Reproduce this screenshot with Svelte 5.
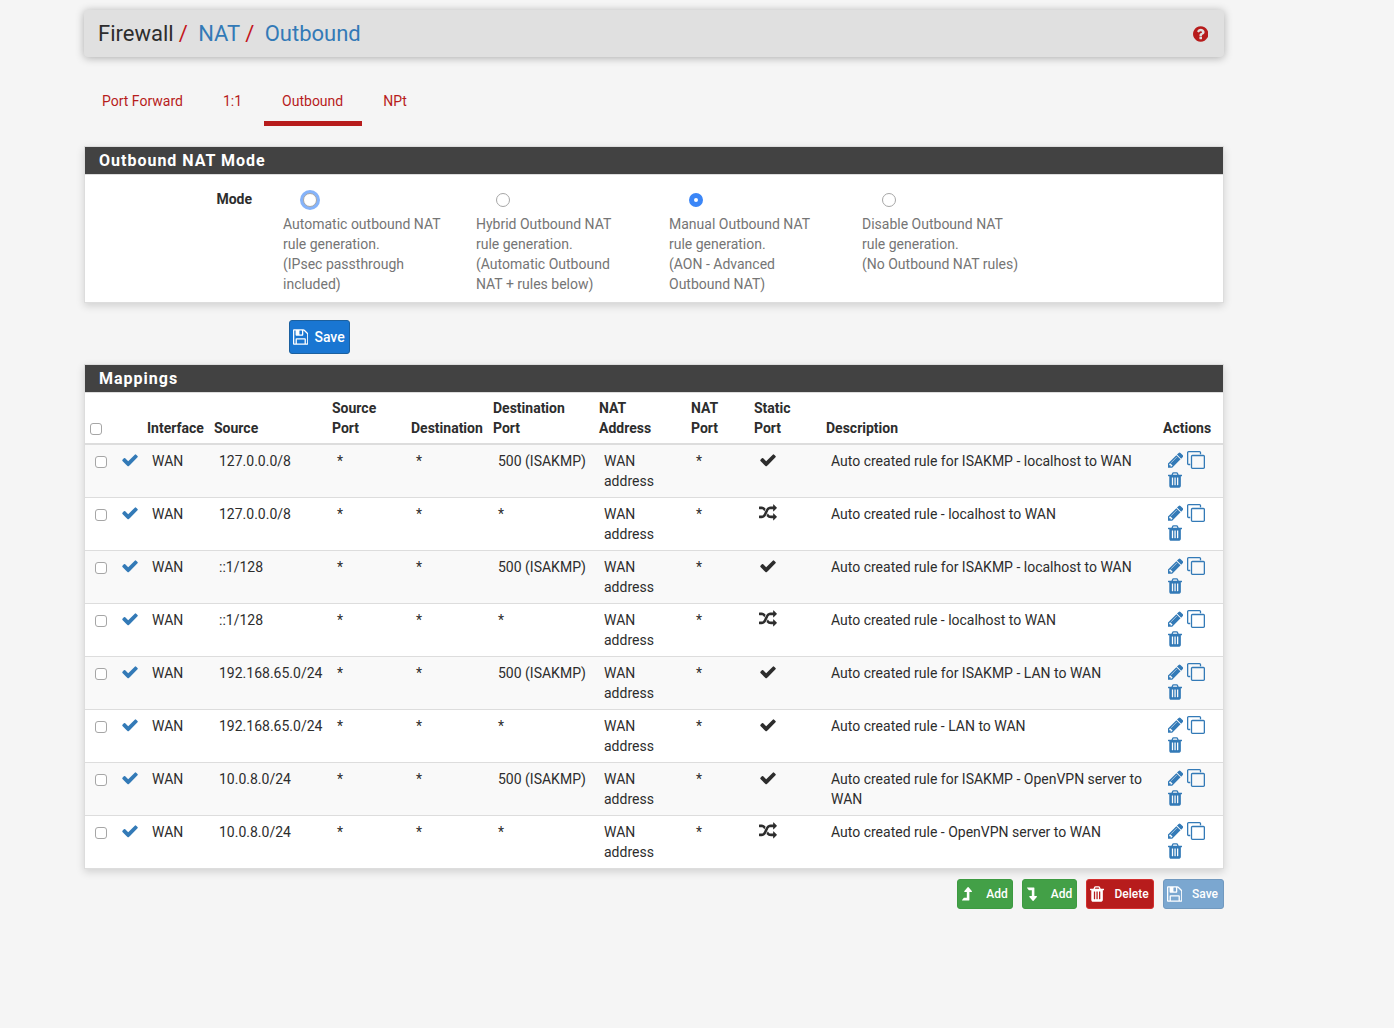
<script lang="ts">
	type Icon = { box: string; d: string };

	const icons: Record<string, Icon> = {
		check: {
			box: '0 0 1792 1792',
			d: 'M1671 566q0 40-28 68l-724 724-136 136q-28 28-68 28t-68-28l-136-136-362-362q-28-28-28-68t28-68l136-136q28-28 68-28t68 28l294 295 656-657q28-28 68-28t68 28l136 136q28 28 28 68z'
		},
		random: {
			box: '0 0 1792 1792',
			d: 'M666 481q-60 92-137 273-22-45-37-72.5t-40.5-63.5-51-56.5-63-35-81.5-14.5h-224q-14 0-23-9t-9-23v-192q0-14 9-23t23-9h224q250 0 410 225zm1126 799q0 14-9 23l-320 320q-9 9-23 9-13 0-22.5-9.5t-9.5-22.5v-192q-32 0-85 .5t-81 1-73-1-71-5-64-10.5-63-18.5-58-28.5-59-40-55-53.5-56-69.5q59-93 136-273 22 45 37 72.5t40.5 63.5 51 56.5 63 35 81.5 14.5h256v-192q0-14 9-23t23-9q12 0 24 10l319 319q9 9 9 23zm0-896q0 14-9 23l-320 320q-9 9-23 9-13 0-22.5-9.5t-9.5-22.5v-192h-256q-48 0-87 15t-69 45-51 61.5-45 77.5q-32 62-78 171-29 66-49.5 111t-54 105-64 100-74 83-90 68.5-106.5 42-128 16.5h-224q-14 0-23-9t-9-23v-192q0-14 9-23t23-9h224q48 0 87-15t69-45 51-61.5 45-77.5q32-62 78-171 29-66 49.5-111t54-105 64-100 74-83 90-68.5 106.5-42 128-16.5h256v-192q0-14 9-23t23-9q12 0 24 10l319 319q9 9 9 23z'
		},
		pencil: {
			box: '128 0 1536 1792',
			d: 'M491 1536l91-91-235-235-91 91v107h128v128h107zm523-928q0-22-22-22-10 0-17 7l-542 542q-7 7-7 17 0 22 22 22 10 0 17-7l542-542q7-7 7-17zm-54-192l416 416-832 832h-416v-416zm683 96q0 53-37 90l-166 166-416-416 166-165q36-38 90-38 53 0 91 38l235 234q37 39 37 91z'
		},
		clone: {
			box: '0 0 1792 1792',
			d: 'M1664 1632v-1088q0-13-9.5-22.5t-22.5-9.5h-1088q-13 0-22.5 9.5t-9.5 22.5v1088q0 13 9.5 22.5t22.5 9.5h1088q13 0 22.5-9.5t9.5-22.5zm128-1088v1088q0 66-47 113t-113 47h-1088q-66 0-113-47t-47-113v-1088q0-66 47-113t113-47h1088q66 0 113 47t47 113zm-384-384v160h-128v-160q0-13-9.5-22.5t-22.5-9.5h-1088q-13 0-22.5 9.5t-9.5 22.5v1088q0 13 9.5 22.5t22.5 9.5h160v128h-160q-66 0-113-47t-47-113v-1088q0-66 47-113t113-47h1088q66 0 113 47t47 113z'
		},
		trash: {
			box: '192 0 1408 1792',
			d: 'M704 1376v-704q0-14-9-23t-23-9h-64q-14 0-23 9t-9 23v704q0 14 9 23t23 9h64q14 0 23-9t9-23zm256 0v-704q0-14-9-23t-23-9h-64q-14 0-23 9t-9 23v704q0 14 9 23t23 9h64q14 0 23-9t9-23zm256 0v-704q0-14-9-23t-23-9h-64q-14 0-23 9t-9 23v704q0 14 9 23t23 9h64q14 0 23-9t9-23zm-544-992h448l-48-117q-7-9-17-11h-317q-10 2-17 11zm928 32v64q0 14-9 23t-23 9h-96v948q0 83-47 143.5t-113 60.5h-832q-66 0-113-58.5t-47-141.5v-952h-96q-14 0-23-9t-9-23v-64q0-14 9-23t23-9h309l70-167q15-37 54-63t79-26h320q40 0 79 26t54 63l70 167h309q14 0 23 9t9 23z'
		},
		save: {
			box: '128 0 1536 1792',
			d: 'M512 1536h768v-384h-768v384zm896 0h128v-896q0-14-10-38.5t-20-34.5l-281-281q-10-10-34-20t-39-10v416q0 40-28 68t-68 28h-576q-40 0-68-28t-28-68v-416h-128v1280h128v-416q0-40 28-68t68-28h832q40 0 68 28t28 68v416zm-384-928v-320q0-13-9.5-22.5t-22.5-9.5h-192q-13 0-22.5 9.5t-9.5 22.5v320q0 13 9.5 22.5t22.5 9.5h192q13 0 22.5-9.5t9.5-22.5zm640 32v928q0 40-28 68t-68 28h-1344q-40 0-68-28t-28-68v-1344q0-40 28-68t68-28h928q40 0 88 20t76 48l280 280q28 28 48 76t20 88z'
		},
		help: {
			box: '128 0 1536 1792',
			d: 'M1024 1376v-192q0-14-9-23t-23-9h-192q-14 0-23 9t-9 23v192q0 14 9 23t23 9h192q14 0 23-9t9-23zm256-672q0-88-55.5-163t-138.5-116-170-41q-243 0-371 213-15 24 8 42l132 100q7 6 19 6 16 0 25-12 53-68 86-92 34-24 86-24 48 0 85.5 26t37.5 59q0 38-20 61t-68 45q-63 28-115.5 86.5t-52.5 125.5v36q0 14 9 23t23 9h192q14 0 23-9t9-23q0-19 21.5-49.5t54.5-49.5q32-18 49-28.5t46-35 44.5-48 28-60.5 12.5-81zm384 192q0 209-103 385.5t-279.5 279.5-385.5 103-385.5-103-279.5-279.5-103-385.5 103-385.5 279.5-279.5 385.5-103 385.5 103 279.5 279.5 103 385.5z'
		},
		up: {
			box: '0 0 1400 1792',
			d: 'M32 1536h672q32 0 32-32V704h192q40 0 57-35 18-35-8-68L657 217q-18-22-49-22t-49 22L239 601q-26 31-8 68 17 35 57 35h192v576H192q-14 0-25 11L7 1483q-13 16-4 34 8 19 29 19z'
		},
		down: {
			box: '0 0 1400 1792',
			d: 'M32 256h672q32 0 32 32v800h192q40 0 57 35 18 35-8 68l-320 384q-18 22-49 22t-49-22l-320-384q-26-31-8-68 17-35 57-35h192V512H192q-14 0-25-11L7 309q-13-16-4-34 8-19 29-19z'
		}
	};

	const tabs = ['Port Forward', '1:1', 'Outbound', 'NPt'];
	let activeTab = $state('Outbound');

	const modes = [
		{ value: 'automatic', name: 'Automatic outbound NAT rule generation.', note: '(IPsec passthrough included)' },
		{ value: 'hybrid', name: 'Hybrid Outbound NAT rule generation.', note: '(Automatic Outbound NAT + rules below)' },
		{ value: 'advanced', name: 'Manual Outbound NAT rule generation.', note: '(AON - Advanced Outbound NAT)' },
		{ value: 'disabled', name: 'Disable Outbound NAT rule generation.', note: '(No Outbound NAT rules)' }
	];
	let mode = $state('advanced');

	const isakmp = '500 (ISAKMP)';
	let rules = $state([
		{ source: '127.0.0.0/8', dport: isakmp, fixed: true, descr: 'Auto created rule for ISAKMP - localhost to WAN', selected: false },
		{ source: '127.0.0.0/8', dport: '*', fixed: false, descr: 'Auto created rule - localhost to WAN', selected: false },
		{ source: '::1/128', dport: isakmp, fixed: true, descr: 'Auto created rule for ISAKMP - localhost to WAN', selected: false },
		{ source: '::1/128', dport: '*', fixed: false, descr: 'Auto created rule - localhost to WAN', selected: false },
		{ source: '192.168.65.0/24', dport: isakmp, fixed: true, descr: 'Auto created rule for ISAKMP - LAN to WAN', selected: false },
		{ source: '192.168.65.0/24', dport: '*', fixed: true, descr: 'Auto created rule - LAN to WAN', selected: false },
		{ source: '10.0.8.0/24', dport: isakmp, fixed: true, descr: 'Auto created rule for ISAKMP - OpenVPN server to WAN', selected: false },
		{ source: '10.0.8.0/24', dport: '*', fixed: false, descr: 'Auto created rule - OpenVPN server to WAN', selected: false }
	]);

	function toggleAll(e: Event) {
		const checked = (e.currentTarget as HTMLInputElement).checked;
		for (const rule of rules) rule.selected = checked;
	}
</script>

{#snippet icon(name: string)}
	<svg class="icon" viewBox={icons[name].box} aria-hidden="true"><path d={icons[name].d} /></svg>
{/snippet}

<div class="container">
	<header>
		<nav class="breadcrumb" aria-label="Breadcrumb">
			<span>Firewall</span><i>/</i>
			<a href="#nat">NAT</a><i>/</i>
			<a href="#outbound">Outbound</a>
		</nav>
		<a class="help" href="#help" aria-label="Help">{@render icon('help')}</a>
	</header>

	<nav class="tabs" aria-label="NAT">
		{#each tabs as tab (tab)}
			<a href="#{tab}" class:active={activeTab === tab} onclick={() => (activeTab = tab)}>{tab}</a>
		{/each}
	</nav>

	<form onsubmit={(e) => e.preventDefault()}>
		<section class="panel">
			<h2>Outbound NAT Mode</h2>
			<div class="mode-row" role="radiogroup" aria-labelledby="mode-label">
				<span id="mode-label" class="mode-label">Mode</span>
				{#each modes as m (m.value)}
					<label class="mode" class:ring={m.value === 'automatic'}>
						<input type="radio" name="mode" value={m.value} bind:group={mode} />
						<span>{m.name}<br />{m.note}</span>
					</label>
				{/each}
			</div>
		</section>
		<button class="btn save" type="submit">{@render icon('save')}Save</button>
	</form>

	<section class="panel">
		<h2>Mappings</h2>
		<table>
			<colgroup>
				<col class="c-select" /><col class="c-state" /><col class="c-iface" /><col class="c-source" />
				<col class="c-sport" /><col class="c-dest" /><col class="c-dport" /><col class="c-addr" />
				<col class="c-nport" /><col class="c-static" /><col /><col class="c-actions" />
			</colgroup>
			<thead>
				<tr>
					<th><input type="checkbox" aria-label="Select all" onchange={toggleAll} /></th>
					<th></th>
					<th>Interface</th>
					<th>Source</th>
					<th>Source Port</th>
					<th>Destination</th>
					<th>Destination Port</th>
					<th>NAT Address</th>
					<th>NAT<br />Port</th>
					<th>Static<br />Port</th>
					<th>Description</th>
					<th>Actions</th>
				</tr>
			</thead>
			<tbody>
				{#each rules as rule, i (i)}
					<tr>
						<td><input type="checkbox" aria-label="Select rule" bind:checked={rule.selected} /></td>
						<td><a class="mark" href="#toggle" aria-label="Toggle rule">{@render icon('check')}</a></td>
						<td>WAN</td>
						<td>{rule.source}</td>
						<td>*</td>
						<td>*</td>
						<td>{rule.dport}</td>
						<td>WAN address</td>
						<td>*</td>
						<td><span class="mark">{@render icon(rule.fixed ? 'check' : 'random')}</span></td>
						<td>{rule.descr}</td>
						<td>
							<div class="actions">
								<a href="#edit" aria-label="Edit">{@render icon('pencil')}</a>
								<a href="#copy" aria-label="Copy">{@render icon('clone')}</a>
								<a href="#delete" aria-label="Delete">{@render icon('trash')}</a>
							</div>
						</td>
					</tr>
				{/each}
			</tbody>
		</table>
	</section>

	<div class="buttons">
		<button class="btn sm add" type="button">{@render icon('up')}Add</button>
		<button class="btn sm add" type="button">{@render icon('down')}Add</button>
		<button class="btn sm delete" type="button">{@render icon('trash')}Delete</button>
		<button class="btn sm store" type="button" disabled>{@render icon('save')}Save</button>
	</div>
</div>

<style>
	:global(body) {
		margin: 0;
		background: #f5f5f5;
	}
	.container {
		box-sizing: border-box;
		max-width: 1224px;
		padding: 10px 0 20px 84px;
		font: 14px/20px Roboto, 'Liberation Sans', sans-serif;
		color: #2d2d2d;
	}
	a {
		color: #337ab7;
		text-decoration: none;
	}
	.icon {
		display: block;
		flex: none;
		height: 18px;
		fill: currentColor;
	}
	header {
		display: flex;
		align-items: center;
		justify-content: space-between;
		height: 47px;
		padding: 0 16px 0 14px;
		background: #e0e0e0;
		border-radius: 4px;
		box-shadow: 0 1px 8px rgba(0, 0, 0, 0.3);
	}
	.breadcrumb {
		font-size: 22px;
		line-height: 24px;
	}
	.breadcrumb i {
		padding: 0 5px;
		color: #c4161c;
		font-style: normal;
	}
	.help {
		color: #b71c1c;
	}
	.tabs {
		display: flex;
		gap: 3px;
		margin: 24px 0 20px;
	}
	.tabs a {
		padding: 10px 19px 10px 18px;
		border-bottom: 5px solid transparent;
		color: #b71c1c;
	}
	.tabs a.active {
		border-color: #b71c1c;
	}
	.panel {
		background: #fff;
		border: 1px solid #ddd;
		box-shadow: 0 3px 8px rgba(0, 0, 0, 0.15);
	}
	h2 {
		margin: 0;
		padding: 3px 14px;
		border-bottom: 1px solid #ddd;
		background: #424242;
		background-clip: padding-box;
		color: #fff;
		font-size: 16px;
		line-height: 21px;
		letter-spacing: 1px;
	}
	.mode-row {
		display: flex;
		padding: 14px 0 8px;
	}
	.mode-label {
		width: 167px;
		margin-right: 31px;
		font-weight: bold;
		text-align: right;
	}
	.mode {
		box-sizing: border-box;
		width: 193px;
		padding-right: 34px;
		color: #757575;
	}
	input {
		appearance: none;
		box-sizing: border-box;
		display: block;
		border: 1px solid #a6a6a6;
		background: #fff;
	}
	input[type='radio'] {
		width: 14px;
		height: 14px;
		margin: 4px 0 7px 20px;
		border-radius: 50%;
	}
	.ring input {
		box-shadow: 0 0 0 3px #85b3fa;
	}
	input[type='radio']:checked {
		border: 5px solid #3b86f7;
	}
	input[type='checkbox'] {
		width: 12px;
		height: 12px;
		margin: 5px 0 3px;
		border-radius: 3px;
	}
	input[type='checkbox']:checked {
		border-color: #3b86f7;
		background: #3b86f7;
	}
	.btn {
		display: flex;
		align-items: center;
		border: 1px solid;
		border-radius: 3px;
		color: #fff;
		font: 500 14px/20px Roboto, 'Liberation Sans', sans-serif;
		cursor: pointer;
	}
	.save {
		gap: 6px;
		height: 34px;
		margin: 17px 0 10px 205px;
		padding: 0 4px 0 3px;
		background: #1976d2;
		border-color: #1b609f;
	}
	table {
		width: 100%;
		table-layout: fixed;
		border-collapse: separate;
		border-spacing: 0;
	}
	th {
		padding: 5px;
		border-bottom: 2px solid #ddd;
		text-align: left;
		vertical-align: bottom;
	}
	td {
		padding: 6px 0 6px 10px;
		vertical-align: top;
	}
	tr + tr td {
		border-top: 1px solid #ddd;
	}
	tbody tr:nth-child(odd) {
		background: #f9f9f9;
	}
	.c-select {
		width: 26px;
	}
	.c-state {
		width: 31px;
	}
	.c-iface {
		width: 67px;
	}
	.c-source {
		width: 118px;
	}
	.c-sport {
		width: 79px;
	}
	.c-dest {
		width: 82px;
	}
	.c-dport {
		width: 106px;
	}
	.c-addr {
		width: 92px;
	}
	.c-nport {
		width: 63px;
	}
	.c-static {
		width: 72px;
	}
	.c-actions {
		width: 65px;
	}
	.mark {
		display: block;
	}
	.actions {
		display: flex;
		flex-wrap: wrap;
		gap: 2px 4px;
		width: 50px;
	}
	.buttons {
		display: flex;
		justify-content: flex-end;
		gap: 9px;
		margin-top: 10px;
	}
	.sm {
		gap: 10px;
		height: 30px;
		padding: 0 4px;
		font-size: 12px;
	}
	.add {
		background: #43a047;
		border-color: #3d9a41;
	}
	.delete {
		padding-left: 3px;
		background: #b71c1c;
		border-color: #d32f2f;
	}
	.store {
		padding: 0 5px 0 3px;
		background: #7ba7d0;
		border-color: #7199bf;
		cursor: default;
	}
</style>
